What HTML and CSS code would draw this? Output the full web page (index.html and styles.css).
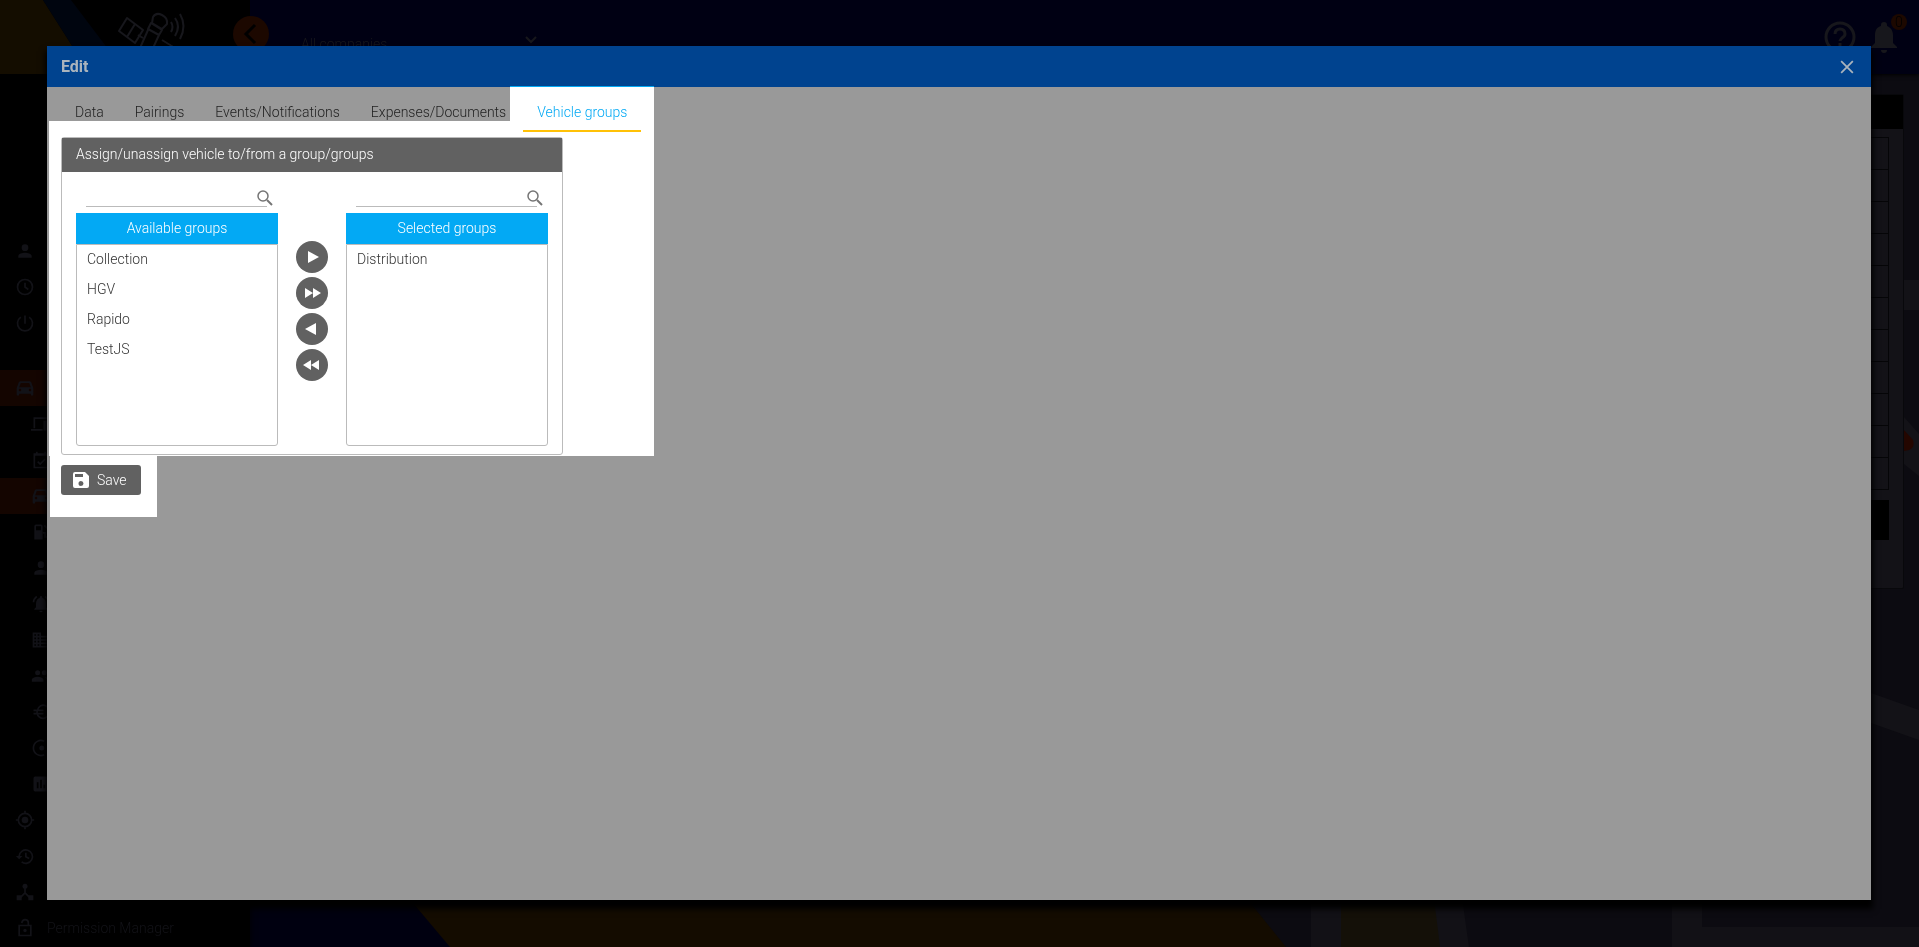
FILE: index.html
```html
<!DOCTYPE html>
<html lang="en">
<head>
  <meta charset="UTF-8">
  <meta name="viewport" content="width=device-width, initial-scale=1.0">
  <title>Edit vehicle</title>
  <link rel="stylesheet" href="styles.css">
</head>
<body>
  <svg class="backdrop" viewBox="0 0 1919 947" preserveAspectRatio="none" aria-hidden="true">
    <rect width="1919" height="947" fill="#0c0b11"/>
    <path d="M1904 280h15v30h-15zM1904 417l15 17v42l-15-12zM1871 693l48 17v30l-48-17z" fill="#131217"/>
    <path d="M1904 430l9 10q3 10-9 11z" fill="#240600"/>
    <path d="M250 890h158l48 57H250z" fill="#000010"/>
    <path d="M402 890h838l46 57H450z" fill="#140c00"/>
    <path d="M1311 890h150l8 57h-158zM1672 890h30v37h217v20h-247z" fill="#121116"/>
    <path d="M1341 890h92l7 57h-99z" fill="#141008"/>
  </svg>

  <div class="app">
    <aside class="sidebar">
      <div class="brand">
        <svg class="brand-art" viewBox="0 0 250 74" aria-hidden="true">
          <path d="M0 0h43l47 74H0z" fill="#140d00"/>
          <path d="M43 0h28l56 74H90z" fill="#00050f"/>
          <g fill="none" stroke="#17171c" stroke-width="2" stroke-linejoin="round">
            <path d="M127 18l16 12-8 13-16-12zM135 24l-8 13"/>
            <path d="M153 17q3-5 9-2q6 3 5 9l-5 5-10-6zM151 23l11 7-3 5-11-6zM148 30l-8 18M159 35l-6 13M162 40l13 8M143 38l-5-3"/>
            <path d="M171 22q3 5 0 10M175 18q6 8 0 18M180 14q7 12 0 25"/>
          </g>
        </svg>
      </div>
      <nav class="menu">
        <a href="#"><svg viewBox="0 0 24 24"><path d="M12 12a4 4 0 1 0 0-8 4 4 0 0 0 0 8zm0 2c-3 0-8 1.300-8 4v2h16v-2c0-2.700-5-4-8-4z"/></svg></a>
        <a href="#"><svg viewBox="0 0 24 24"><path class="line" d="M12 3a9 9 0 1 0 0 18 9 9 0 0 0 0-18zM12 7v5l4 3"/></svg></a>
        <a href="#"><svg viewBox="0 0 24 24"><path class="line" d="M12 3v10M7 5a9 9 0 1 0 10 0"/></svg></a>
        <a href="#" class="group active"><svg viewBox="0 0 24 24"><use href="#car"/></svg></a>
        <a href="#" class="sub"><svg viewBox="0 0 24 24"><path class="line" d="M4 17V5h18M0 19h14"/><path d="M15 8h8v12h-8z"/></svg></a>
        <a href="#" class="sub"><svg viewBox="0 0 24 24"><path class="line" d="M4 5h16v16H4zM4 6h16M7 2v4M17 2v4M8 14l3 3 6-6"/></svg></a>
        <a href="#" class="sub active"><svg viewBox="0 0 24 24"><use href="#car"/></svg></a>
        <a href="#" class="sub"><svg viewBox="0 0 24 24"><path fill-rule="evenodd" d="M6 3h6a2 2 0 0 1 2 2v16H4V5a2 2 0 0 1 2-2zm0 2v5h6V5z"/><path class="line" d="M14 13h3v5h3V8l-4-4"/></svg></a>
        <a href="#" class="sub"><svg viewBox="0 0 24 24"><path d="M12 12a4 4 0 1 0 0-8 4 4 0 0 0 0 8zm0 2c-3 0-8 1.300-8 4v2h16v-2c0-2.700-5-4-8-4z"/></svg></a>
        <a href="#" class="sub"><svg viewBox="0 0 24 24"><path d="M12 22a2 2 0 0 0 2-2h-4a2 2 0 0 0 2 2zm6-11c0-3-2-6-4.500-6.500V4a1.500 1.500 0 0 0-3 0v.7C8 5 6 8 6 11v5l-2 2v1h16v-1l-2-2z"/><path class="line" d="M3 10q0-4 4-7M21 10q0-4-4-7"/></svg></a>
        <a href="#" class="sub"><svg viewBox="0 0 24 24"><path fill-rule="evenodd" d="M2 3h10v4h10v14H2zm2 2v2h2V5zm4 0v2h2V5zM4 9v2h2V9zm4 0v2h2V9zm-4 4v2h2v-2zm4 0v2h2v-2zm-4 4v2h2v-2zm4 0v2h2v-2zm4-8v10h8V9z"/><path d="M12 11h8v2h-8zM12 15h8v2h-8z"/></svg></a>
        <a href="#" class="sub"><svg viewBox="0 0 24 24"><path d="M8 11a3 3 0 1 0 0-6 3 3 0 0 0 0 6zm8 0a3 3 0 1 0 0-6 3 3 0 0 0 0 6zm-8 2c-2.300 0-7 1.200-7 3.500V19h14v-2.500C15 14.200 10.300 13 8 13zm9 1c2 1 2 2 2 5h5v-2.500c0-2-4-3-7-3z"/></svg></a>
        <a href="#" class="sub"><svg viewBox="0 0 24 24"><path class="line" d="M20 6q-6-5-11 1-4 7 1 11 5 4 10-1M3 10h12M3 14h12"/></svg></a>
        <a href="#" class="sub"><svg viewBox="0 0 24 24"><path class="line" d="M16 4a9 9 0 1 0 0 16"/><circle cx="13" cy="12" r="3"/></svg></a>
        <a href="#" class="sub"><svg viewBox="0 0 24 24"><path fill-rule="evenodd" d="M5 3h14a2 2 0 0 1 2 2v14a2 2 0 0 1-2 2H5a2 2 0 0 1-2-2V5a2 2 0 0 1 2-2zm2 7v7h2v-7zm4-3v10h2V7zm4 6v4h2v-4z"/></svg></a>
        <a href="#"><svg viewBox="0 0 24 24"><circle cx="12" cy="12" r="4"/><path class="line" d="M12 4a8 8 0 1 0 0 16 8 8 0 0 0 0-16zM12 1v3M12 20v3M1 12h3M20 12h3"/></svg></a>
        <a href="#"><svg viewBox="0 0 24 24"><path class="line" d="M5 12a8 8 0 1 1 3 7M13 8v5l4 2"/><path d="M1 12h8l-4 4z"/></svg></a>
        <a href="#"><svg viewBox="0 0 24 24"><circle cx="12" cy="5" r="3"/><path class="line" d="M12 6v7l-6 6M12 13l6 6"/><path d="M2 16h6v6H2zM16 16h6v6h-6z"/></svg></a>
        <a href="#"><svg viewBox="0 0 24 24"><path class="line" d="M5 9h14v12H5zM8 6q1-4 4-4 4 0 4 4v3"/><circle cx="12" cy="15" r="2"/></svg><span>Permission Manager</span></a>
      </nav>
    </aside>

    <div class="main">
      <header class="topbar">
        <button class="collapse" type="button" aria-label="Collapse menu">
          <svg viewBox="0 0 36 36"><path d="M22 9l-9 9 9 9" fill="none" stroke="#000" stroke-width="3"/></svg>
        </button>
        <div class="company">
          <select aria-label="Company"><option>All companies</option></select>
          <svg viewBox="0 0 12 8"><path d="M1 1l5 5 5-5" fill="none" stroke="#17171c" stroke-width="2"/></svg>
        </div>
        <div class="top-actions">
          <button type="button" aria-label="Help">
            <svg viewBox="0 0 32 32"><circle cx="16" cy="16" r="14" fill="none" stroke="#17171c" stroke-width="3"/><path d="M11 13q0-5 5-5t5 5q0 2-3 4-2 2-2 3M16 22v3" fill="none" stroke="#17171c" stroke-width="3"/></svg>
          </button>
          <button type="button" aria-label="Notifications">
            <svg viewBox="0 0 32 32"><path d="M16 32a3 3 0 0 0 3-3h-6a3 3 0 0 0 3 3zm9-10v-8c0-5-3-8-6-9V4a3 3 0 0 0-6 0v1c-4 1-6 4-6 9v8l-4 4v1h26v-1z" fill="#17171c"/></svg>
            <span class="badge">0</span>
          </button>
        </div>
      </header>
      <section class="card">
        <div class="card-head"></div>
        <div class="rows">
          <div></div><div></div><div></div><div></div><div></div><div></div>
          <div></div><div></div><div></div><div></div><div></div>
        </div>
        <div class="card-foot"></div>
      </section>
    </div>
  </div>

  <div class="dialog" role="dialog" aria-labelledby="dialog-title">
    <header class="dialog-head">
      <h1 id="dialog-title">Edit</h1>
      <button class="close" type="button" aria-label="Close">
        <svg viewBox="0 0 12 12"><path d="M1 1l10 10M11 1L1 11" fill="none" stroke="#aab4bd" stroke-width="1.500"/></svg>
      </button>
    </header>
    <nav class="tabs">
      <a href="#">Data</a>
      <a href="#">Pairings</a>
      <a href="#">Events/Notifications</a>
      <a href="#">Expenses/Documents</a>
      <a href="#" class="current">Vehicle groups</a>
    </nav>

    <div class="tab-content">
      <section class="panel">
        <h2>Assign/unassign vehicle to/from a group/groups</h2>
        <div class="picker">
          <div class="column">
            <div class="search">
              <input type="text" aria-label="Search available groups">
              <svg viewBox="0 0 16 16"><use href="#magnifier"/></svg>
            </div>
            <h3>Available groups</h3>
            <ul>
              <li>Collection</li>
              <li>HGV</li>
              <li>Rapido</li>
              <li>TestJS</li>
            </ul>
          </div>
          <div class="moves">
            <button type="button" aria-label="Add"><svg viewBox="0 0 32 32"><path d="M12 10l11 6-11 6z"/></svg></button>
            <button type="button" aria-label="Add all"><svg viewBox="0 0 32 32"><path d="M9 11l8 5-8 5zM17 11l8 5-8 5z"/></svg></button>
            <button type="button" aria-label="Remove"><svg viewBox="0 0 32 32"><path d="M20 10L9 16l11 6z"/></svg></button>
            <button type="button" aria-label="Remove all"><svg viewBox="0 0 32 32"><path d="M15 11l-8 5 8 5zM23 11l-8 5 8 5z"/></svg></button>
          </div>
          <div class="column">
            <div class="search">
              <input type="text" aria-label="Search selected groups">
              <svg viewBox="0 0 16 16"><use href="#magnifier"/></svg>
            </div>
            <h3>Selected groups</h3>
            <ul>
              <li>Distribution</li>
            </ul>
          </div>
        </div>
      </section>
    </div>
    <div class="actions">
      <button class="save" type="button">
        <svg viewBox="0 0 16 16"><path fill-rule="evenodd" d="M2 0h10l4 4v10a2 2 0 0 1-2 2H2a2 2 0 0 1-2-2V2a2 2 0 0 1 2-2zm0 2v3h8V2zm6 7a2 2 0 1 0 0 5 2 2 0 0 0 0-5z"/></svg>
        Save
      </button>
    </div>
  </div>

  <svg class="symbols" aria-hidden="true">
    <symbol id="car" viewBox="0 0 24 24"><path fill-rule="evenodd" d="M6 4h12l1.500 1L22 12v8a1 1 0 0 1-1 1h-1a1 1 0 0 1-1-1v-1H5v1a1 1 0 0 1-1 1H3a1 1 0 0 1-1-1v-8l2.500-7zm1 2l-2 5h14l-2-5zm-1 7a1.500 1.500 0 1 0 0 3 1.500 1.500 0 0 0 0-3zm12 0a1.500 1.500 0 1 0 0 3 1.500 1.500 0 0 0 0-3z"/></symbol>
    <symbol id="magnifier" viewBox="0 0 16 16"><circle cx="6" cy="6" r="5" fill="none" stroke="#757575" stroke-width="1.500"/><path d="M10 10l5 5" stroke="#757575" stroke-width="2"/></symbol>
  </svg>
</body>
</html>
```
FILE: styles.css
```css
* {
  box-sizing: border-box;
  margin: 0;
  padding: 0;
}

body {
  background: #000;
  font-family: Roboto, sans-serif;
  font-size: 14px;
  font-weight: 300;
  height: 100vh;
  overflow: hidden;
}

button {
  border: none;
  background: none;
  font: inherit;
  cursor: pointer;
}

a {
  text-decoration: none;
  color: inherit;
}

svg {
  display: block;
}

.symbols {
  position: absolute;
  width: 0;
  height: 0;
}

.backdrop {
  position: fixed;
  top: 0;
  left: 0;
  width: 100%;
  height: 100%;
}

/* page behind the dialog */
.app {
  position: relative;
  display: flex;
  height: 100vh;
}

.sidebar {
  width: 250px;
  flex: none;
  background: #000;
  box-shadow: 0 0 6px #000;
}

.brand {
  height: 74px;
}

.brand-art {
  width: 250px;
  height: 74px;
}

.menu {
  padding-top: 159px;
  color: #121217;
}

.menu a {
  display: flex;
  align-items: center;
  gap: 12px;
  height: 36px;
  padding-left: 15px;
}

.menu .sub {
  padding-left: 31px;
}

.menu .group {
  margin-top: 29px;
}

.menu .active {
  background: #140500;
}

.menu svg {
  width: 20px;
  height: 20px;
  fill: #121217;
}

.menu .line {
  fill: none;
  stroke: #121217;
  stroke-width: 2;
}

.main {
  flex: 1;
}

.topbar {
  display: flex;
  align-items: flex-start;
  height: 74px;
  background: #000013;
  box-shadow: 0 1px 4px #000;
}

.collapse {
  width: 36px;
  height: 36px;
  margin: 16px 0 0 -17px;
  border-radius: 50%;
  background: #1c0800;
  position: relative;
}

.company {
  display: flex;
  align-items: center;
  width: 236px;
  margin: 32px 0 0 32px;
}

.company select {
  flex: 1;
  appearance: none;
  border: none;
  background: none;
  color: #17171c;
  font: inherit;
  height: 24px;
}

.company svg {
  width: 12px;
  height: 8px;
  margin-bottom: 8px;
}

.top-actions {
  display: flex;
  gap: 12px;
  margin: 21px 19px 0 auto;
}

.top-actions button {
  position: relative;
  width: 32px;
  height: 32px;
}

.badge {
  position: absolute;
  top: -7px;
  right: -7px;
  width: 16px;
  height: 16px;
  border-radius: 50%;
  background: #1c0800;
  color: #000;
  font-size: 14px;
  line-height: 16px;
}

.card {
  margin: 20px 15px 0;
  padding-bottom: 48px;
  background: #131217;
  border: 1px solid #08080b;
  border-radius: 2px;
}

.card-head {
  height: 34px;
  background: #000;
}

.rows {
  margin: 8px 14px 10px;
  border: 1px solid #050507;
  border-bottom: none;
}

.rows div {
  height: 32px;
  border-bottom: 1px solid #050507;
}

.card-foot {
  height: 40px;
  margin: 0 14px;
  background: #000;
}

/* dialog */
.dialog {
  position: fixed;
  top: 46px;
  right: 48px;
  bottom: 47px;
  left: 47px;
  background: #999;
  box-shadow: 0 7px 6px 2px #000;
}

.dialog-head {
  display: flex;
  align-items: center;
  justify-content: space-between;
  height: 41px;
  padding: 0 17px 0 14px;
  background: #00438f;
  color: #aab4bd;
}

.dialog-head h1 {
  font-size: 16px;
  font-weight: 700;
}

.close svg {
  width: 14px;
  height: 14px;
}

.tabs {
  display: flex;
  gap: 3px;
  height: 34px;
  padding-left: 14px;
  color: #222;
}

.tabs a {
  height: 45px;
  padding: 0 14px;
  line-height: 50px;
}

.tabs .current {
  position: relative;
  background: #fff;
  border-bottom: 2px solid #ffc107;
  box-shadow: -13px 0 #fff, 13px 0 #fff;
  color: #03a9f4;
  z-index: 1;
}

.tabs .current::before {
  content: '';
  position: absolute;
  top: -1px;
  left: -13px;
  right: -13px;
  height: 1px;
  background: #03a9f4;
}

.tab-content {
  width: 605px;
  margin-left: 2px;
  padding: 16px 12px 1px;
  background: #fff;
}

.panel {
  width: 502px;
  border: 1px solid #bbb;
  border-radius: 3px;
}

.panel h2 {
  height: 34px;
  padding-left: 14px;
  background: #616161;
  color: #fff;
  font-size: 14px;
  font-weight: 300;
  line-height: 33px;
}

.picker {
  display: flex;
  gap: 18px;
  padding: 14px 14px 8px;
}

.column {
  width: 202px;
}

.search {
  display: flex;
  align-items: flex-end;
  height: 21px;
  margin: 0 5px 6px 10px;
}

.search input {
  width: 182px;
  height: 21px;
  border: none;
  border-bottom: 1px solid #bbb;
  outline: none;
  font: inherit;
}

.search svg {
  flex: none;
  width: 16px;
  height: 16px;
  margin: 0 0 1px -10px;
}

.column h3 {
  height: 31px;
  background: #03a9f4;
  color: #fff;
  font-size: 14px;
  font-weight: 300;
  line-height: 30px;
  text-align: center;
}

.column ul {
  height: 202px;
  border: 1px solid #bbb;
  border-radius: 0 0 3px 3px;
  list-style: none;
}

.column li {
  height: 30px;
  padding-left: 10px;
  color: #333;
  line-height: 28px;
}

.moves {
  display: flex;
  flex-direction: column;
  gap: 4px;
  padding-top: 55px;
}

.moves button {
  width: 32px;
  height: 32px;
  border-radius: 50%;
  background: #616161;
}

.moves svg,
.save svg {
  fill: #fff;
}

.actions {
  width: 107px;
  margin-left: 3px;
  padding: 9px 11px 22px;
  background: #fff;
}

.save {
  display: flex;
  align-items: center;
  gap: 8px;
  width: 80px;
  height: 30px;
  padding-left: 12px;
  border-radius: 3px;
  background: #616161;
  color: #fff;
}

.save svg {
  width: 16px;
  height: 16px;
}
```
